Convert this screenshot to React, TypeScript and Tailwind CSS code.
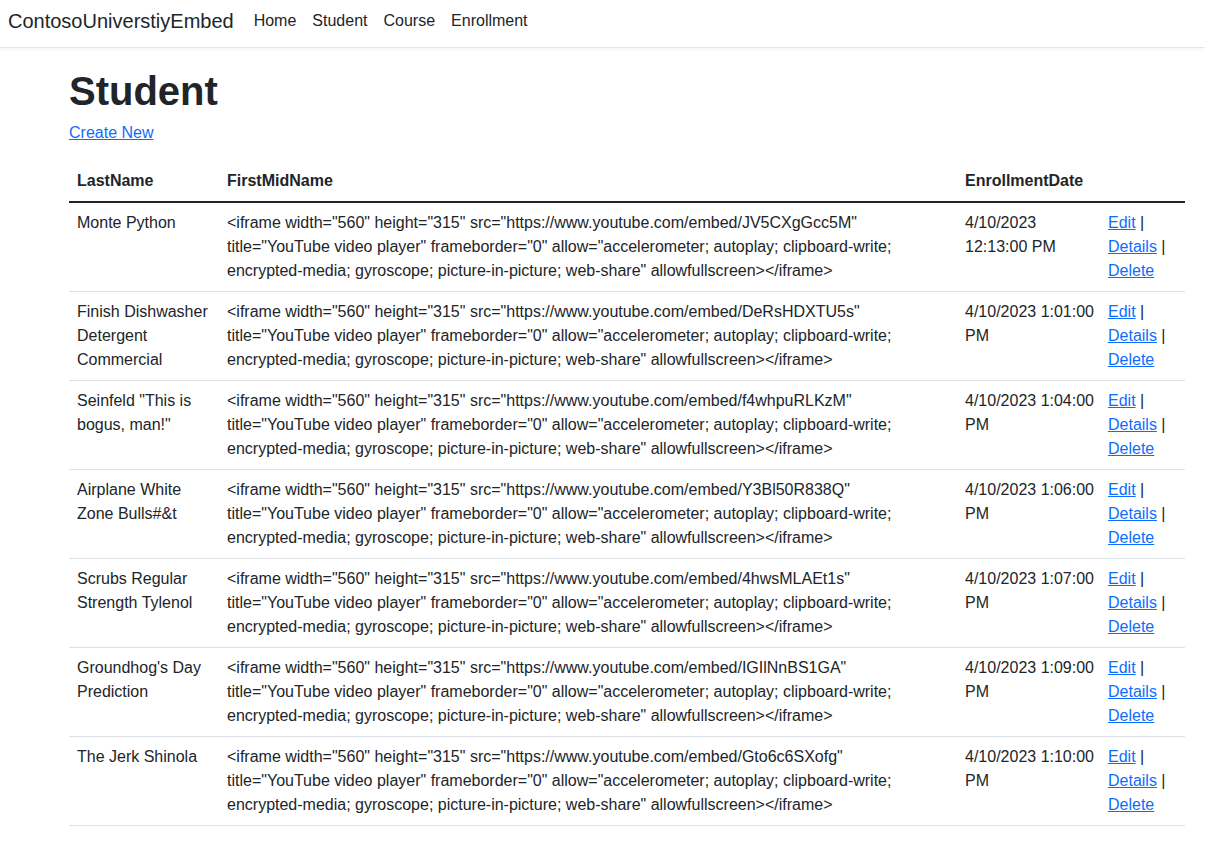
import React from "react";

type Row = { last: string[]; id: string; date: string[] };

const rows: Row[] = [
  { last: ["Monte Python"], id: "JV5CXgGcc5M", date: ["4/10/2023", "12:13:00 PM"] },
  { last: ["Finish Dishwasher", "Detergent", "Commercial"], id: "DeRsHDXTU5s", date: ["4/10/2023 1:01:00", "PM"] },
  { last: ['Seinfeld "This is', 'bogus, man!"'], id: "f4whpuRLKzM", date: ["4/10/2023 1:04:00", "PM"] },
  { last: ["Airplane White", "Zone Bulls#&t"], id: "Y3Bl50R838Q", date: ["4/10/2023 1:06:00", "PM"] },
  { last: ["Scrubs Regular", "Strength Tylenol"], id: "4hwsMLAEt1s", date: ["4/10/2023 1:07:00", "PM"] },
  { last: ["Groundhog's Day", "Prediction"], id: "IGIlNnBS1GA", date: ["4/10/2023 1:09:00", "PM"] },
  { last: ["The Jerk Shinola"], id: "Gto6c6SXofg", date: ["4/10/2023 1:10:00", "PM"] },
];

function Lines({ lines }: { lines: string[] }) {
  return (
    <>
      {lines.map((l, i) => (
        <span key={i} className="block whitespace-nowrap">
          {l}
        </span>
      ))}
    </>
  );
}

export default function App() {
  return (
    <div
      className="min-h-[861px] bg-white text-[#212529] text-[16px] leading-[24px]"
      style={{ fontFamily: '"Liberation Sans", Arial, sans-serif' }}
    >
      <nav className="h-[48px] flex items-center px-[8px] pb-[6px] border-b border-[#e5e7eb] shadow-[0_1px_4px_rgba(0,0,0,0.06)]">
        <span className="text-[20px] leading-[30px] text-[#212529] mr-[12px]">ContosoUniverstiyEmbed</span>
        <ul className="flex items-center">
          {["Home", "Student", "Course", "Enrollment"].map((n) => (
            <li key={n} className="px-[8px] text-[#212529]">
              {n}
            </li>
          ))}
        </ul>
      </nav>
      <main className="pl-[69px] pr-[20px] pt-[19px]">
        <h1 className="text-[40px] leading-[48px] font-bold mb-[6px]">Student</h1>
        <p className="mb-[16px]">
          <a href="#" className="text-[#0d6efd] underline">
            Create New
          </a>
        </p>
        <table className="w-[1116px] table-fixed border-collapse">
          <colgroup>
            <col className="w-[150px]" />
            <col className="w-[738px]" />
            <col className="w-[143px]" />
            <col className="w-[85px]" />
          </colgroup>
          <thead>
            <tr className="border-b-2 border-[#212529]">
              <th className="text-left font-bold px-[8px] py-[8px]">LastName</th>
              <th className="text-left font-bold px-[8px] py-[8px]">FirstMidName</th>
              <th className="text-left font-bold px-[8px] py-[8px]">EnrollmentDate</th>
              <th className="px-[8px] py-[8px]"></th>
            </tr>
          </thead>
          <tbody>
            {rows.map((r) => (
              <tr key={r.id} className="border-b border-[#dee2e6] align-top">
                <td className="px-[8px] py-[8px]">
                  <Lines lines={r.last} />
                </td>
                <td className="px-[8px] py-[8px]">
                  <Lines
                    lines={[
                      `<iframe width="560" height="315" src="https://www.youtube.com/embed/${r.id}"`,
                      'title="YouTube video player" frameborder="0" allow="accelerometer; autoplay; clipboard-write;',
                      'encrypted-media; gyroscope; picture-in-picture; web-share" allowfullscreen></iframe>',
                    ]}
                  />
                </td>
                <td className="px-[8px] py-[8px]">
                  <Lines lines={r.date} />
                </td>
                <td className="px-[8px] py-[8px] whitespace-nowrap">
                  <span className="block">
                    <a href="#" className="text-[#0d6efd] underline">Edit</a> |
                  </span>
                  <span className="block">
                    <a href="#" className="text-[#0d6efd] underline">Details</a> |
                  </span>
                  <span className="block">
                    <a href="#" className="text-[#0d6efd] underline">Delete</a>
                  </span>
                </td>
              </tr>
            ))}
          </tbody>
        </table>
      </main>
    </div>
  );
}
